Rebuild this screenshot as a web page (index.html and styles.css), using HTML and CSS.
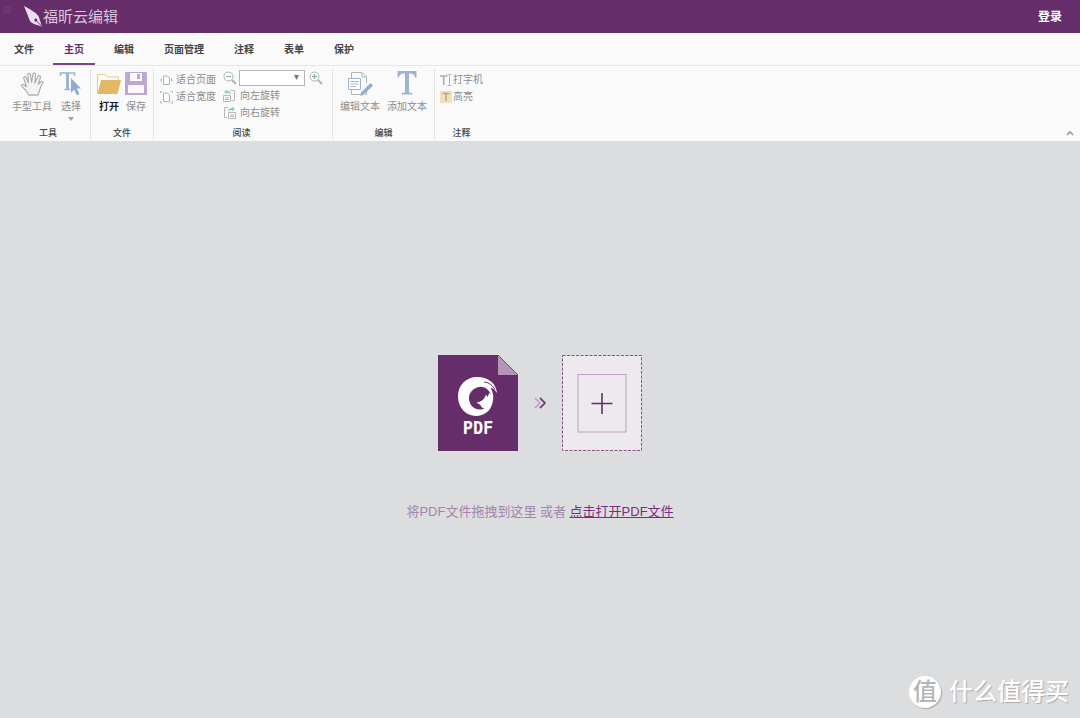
FILE: index.html
```html
<!DOCTYPE html>
<html lang="zh-CN">
<head>
<meta charset="utf-8">
<meta name="viewport" content="width=device-width, initial-scale=1">
<title>福昕云编辑</title>
<link rel="stylesheet" href="styles.css">
</head>
<body>
<header class="topbar">
  <div class="brand">
    <svg class="brand-icon" width="20" height="22" viewBox="0 0 20 22" aria-hidden="true">
      <path d="M1 0C6 2.500 13 6.500 15.500 10L19 20.500C14 19 8.500 17.500 7 15Z" fill="#eadff0"/>
      <path d="M18.500 20L13.500 15" stroke="#662d6b" stroke-width="1"/>
      <circle cx="12.800" cy="14" r="1.500" fill="#662d6b"/>
    </svg>
    <h1 class="brand-name">福昕云编辑</h1>
  </div>
  <button class="login" type="button">登录</button>
</header>

<nav class="tabs">
  <button class="tab" type="button">文件</button>
  <button class="tab tab-active" type="button">主页</button>
  <button class="tab" type="button">编辑</button>
  <button class="tab" type="button">页面管理</button>
  <button class="tab" type="button">注释</button>
  <button class="tab" type="button">表单</button>
  <button class="tab" type="button">保护</button>
</nav>

<section class="ribbon">
  <div class="group group-tools">
    <div class="group-body">
      <button class="tool" type="button">
        <svg width="26" height="26" viewBox="0 0 26 26" aria-hidden="true">
          <path d="M9.500 24C8.500 20.500 6 18.500 3 15.500C1.500 13.800 3.300 12.600 5 13.800L7.500 15.700L4.800 7.500C4.300 5.500 6.500 5 7.200 6.800L9.500 12L8.800 3.800C8.800 1.700 11.200 1.700 11.500 3.700L12.600 11.500L14 3.200C14.400 1.300 16.700 1.600 16.500 3.700L15.900 12L19 5.600C19.900 3.800 22 4.700 21.400 6.600L19.200 13.300L21.700 10.800C23.200 9.500 24.700 10.900 23.500 12.500C21.500 15.500 20.500 20 19 24Z" fill="#f4f4f4" stroke="#a8a8a8" stroke-width="1.100" stroke-linejoin="round"/>
          <path d="M9.500 24H19" stroke="#bdbdbd" stroke-width="1.500"/>
        </svg>
        <span>手型工具</span>
      </button>
      <button class="tool" type="button">
        <svg width="26" height="26" viewBox="0 0 26 26" aria-hidden="true">
          <path d="M2.500 5V2H16.500V5M9.500 2V18M6.500 18.500H12.500" fill="none" stroke="#9db3d6" stroke-width="1.500"/>
          <path d="M9.500 2V18" stroke="#9db3d6" stroke-width="3"/>
          <path d="M13 7L23 17.500H18.700L21.500 23L18.800 24.300L16.200 18.800L13 21.800Z" fill="#8fa9d0"/>
        </svg>
        <span>选择</span>
        <svg width="6" height="4" viewBox="0 0 6 4" aria-hidden="true"><path d="M0 0H6L3 4Z" fill="#a5a29c"/></svg>
      </button>
    </div>
    <h2 class="group-title">工具</h2>
  </div>

  <div class="group group-file">
    <div class="group-body">
      <button class="tool tool-enabled" type="button">
        <svg width="26" height="26" viewBox="0 0 26 26" aria-hidden="true">
          <path d="M1.500 22V3.500H9L11 6H22.500V10" fill="#fff" stroke="#e9c98f" stroke-width="1"/>
          <path d="M5 9H25L21.500 23H1.500Z" fill="#e3b864"/>
        </svg>
        <span>打开</span>
      </button>
      <button class="tool" type="button">
        <svg width="24" height="26" viewBox="0 0 24 26" aria-hidden="true">
          <path d="M1 1H22L23 2V24H1Z" fill="#bda7d3"/>
          <path d="M6 2H18V10H6Z M4 14H20V22H4Z" fill="#fbf9fc"/>
          <path d="M13 3H16V8H13Z" fill="#bda7d3"/>
        </svg>
        <span>保存</span>
      </button>
    </div>
    <h2 class="group-title">文件</h2>
  </div>

  <div class="group group-read">
    <div class="group-body">
      <div class="rows rows-fit">
        <button class="row-tool" type="button">
          <svg width="13" height="14" viewBox="0 0 13 14" aria-hidden="true">
            <path d="M3.500 3H7.500L9.500 5V11.500H3.500Z" fill="#fff" stroke="#b0b0b0"/>
            <path d="M0 7L2 5V9ZM13 7L11 5V9Z" fill="#9ccdb2"/>
          </svg>
          <span>适合页面</span>
        </button>
        <button class="row-tool" type="button">
          <svg width="13" height="14" viewBox="0 0 13 14" aria-hidden="true">
            <path d="M3.500 3H7.500L9.500 5V11.500H3.500Z" fill="#fff" stroke="#b0b0b0"/>
            <path d="M.5 3V1.500H2.500M10.500 1.500H12.500V3M.5 11V13H2.500M10.500 13H12.500V11" fill="none" stroke="#9ccdb2"/>
          </svg>
          <span>适合宽度</span>
        </button>
      </div>
      <div class="rows">
        <div class="zoom-row">
          <button class="icon-button" type="button" aria-label="缩小">
            <svg width="14" height="14" viewBox="0 0 14 14" aria-hidden="true">
              <circle cx="5.500" cy="5.500" r="4.500" fill="#fff" stroke="#b0b0b0"/>
              <path d="M3 5.500H8" stroke="#86bf9f" stroke-width="1.300"/>
              <path d="M9 9L13 13" stroke="#b0b0b0" stroke-width="1.800"/>
            </svg>
          </button>
          <span class="zoom-box">
            <select class="zoom-select" aria-label="缩放比例"><option></option></select>
            <svg class="zoom-arrow" width="5" height="5" viewBox="0 0 5 5" aria-hidden="true"><path d="M0 0H5L2.500 5Z" fill="#777"/></svg>
          </span>
          <button class="icon-button" type="button" aria-label="放大">
            <svg width="14" height="14" viewBox="0 0 14 14" aria-hidden="true">
              <circle cx="5.500" cy="5.500" r="4.500" fill="#fff" stroke="#b0b0b0"/>
              <path d="M3 5.500H8M5.500 3V8" stroke="#86bf9f" stroke-width="1.500"/>
              <path d="M9 9L13 13" stroke="#b0b0b0" stroke-width="1.800"/>
            </svg>
          </button>
        </div>
        <button class="row-tool row-rotate" type="button">
          <svg width="13" height="14" viewBox="0 0 13 14" aria-hidden="true">
            <path d="M7.500 1.500H11.500V11.500H8.500M.5 6.500H7.500V12.500H.5Z M2 9H6M2 10.500H6" fill="none" stroke="#b8b8b8"/>
            <path d="M1 3L4 .5V2C7 2 8 3.500 8 6C7 4.500 6 4 4 4V5.500Z" fill="#9ccdb2"/>
          </svg>
          <span>向左旋转</span>
        </button>
        <button class="row-tool row-rotate" type="button">
          <svg width="13" height="14" viewBox="0 0 13 14" aria-hidden="true">
            <path d="M5 1.500H1.500V11.500H4M5.500 6.500H12.500V12.500H5.500Z M7 9H11M7 10.500H11" fill="none" stroke="#b8b8b8"/>
            <path d="M12 3L9 .5V2C6 2 5 3.500 5 6C6 4.500 7 4 9 4V5.500Z" fill="#9ccdb2"/>
          </svg>
          <span>向右旋转</span>
        </button>
      </div>
    </div>
    <h2 class="group-title">阅读</h2>
  </div>

  <div class="group group-edit">
    <div class="group-body">
      <button class="tool" type="button">
        <svg width="26" height="26" viewBox="0 0 26 26" aria-hidden="true">
          <path d="M4.500 7V1.500H15L19.500 6V12M4.500 19V23.500H13M19.500 20V23.500H18M15 1.500V6H19.500" fill="none" stroke="#b4b4b4"/>
          <path d="M1.500 7.500H13.500V18.500H1.500Z" fill="#fff" stroke="#9db3d6"/>
          <path d="M3.500 10.500H11.500M3.500 13H11.500M3.500 15.500H9" stroke="#9db3d6"/>
          <path d="M13 25L14 21.500L23.500 12L26 14.500L16.500 24Z" fill="#94add3"/>
        </svg>
        <span>编辑文本</span>
      </button>
      <button class="tool" type="button">
        <svg width="26" height="26" viewBox="0 0 26 26" aria-hidden="true">
          <path d="M3.500 0H22.500V6.500H21C20.500 3.500 19 2.500 15 2.500V20.500C15 21.500 16 22 18.500 22V23.500H7.500V22C10 22 11 21.500 11 20.500V2.500C7 2.500 5.500 3.500 5 6.500H3.500Z" fill="#9db3d6"/>
        </svg>
        <span>添加文本</span>
      </button>
    </div>
    <h2 class="group-title">编辑</h2>
  </div>

  <div class="group group-note">
    <div class="group-body">
      <div class="rows rows-fit">
        <button class="row-tool row-tight" type="button">
          <svg width="12" height="14" viewBox="0 0 12 14" aria-hidden="true">
            <path d="M0 3H7.500M3.700 3V12" stroke="#adadad" stroke-width="1.500"/>
            <path d="M7.500 1.500H9L9.500 2L10 1.500H11.500M9.500 2V12M7.500 12.500H11.500" fill="none" stroke="#9db8e0"/>
          </svg>
          <span>打字机</span>
        </button>
        <button class="row-tool row-tight" type="button">
          <svg width="12" height="14" viewBox="0 0 12 14" aria-hidden="true">
            <path d="M0 1H12V13H0Z" fill="#f3dfb9"/>
            <path d="M2.500 3.500H9.500M6 3V11" stroke="#b3a78f" stroke-width="1.500"/>
          </svg>
          <span>高亮</span>
        </button>
      </div>
    </div>
    <h2 class="group-title">注释</h2>
  </div>

  <button class="collapse" type="button" aria-label="收起">
    <svg width="8" height="6" viewBox="0 0 8 6" aria-hidden="true"><path d="M1 5L4 2L7 5" fill="none" stroke="#999" stroke-width="1.600"/></svg>
  </button>
</section>

<main class="workspace">
  <div class="drop-visual">
    <svg width="80" height="96" viewBox="0 0 80 96" role="img" aria-label="PDF">
      <path d="M0 0H60L80 20V96H0Z" fill="#662d6b"/>
      <path d="M60 0L80 20H60Z" fill="#b396b6"/>
      <path d="M60 0L80 20" stroke="#7d4b83"/>
      <path d="M20 41.500C20 30 28 22 39 22C50 22 58 28 59 38C57 35 55 33.500 52.500 32.500C55.500 38 56 43 54.500 48C52.500 56 46 61 38 61C28 61 20 52.500 20 41.500Z" fill="#fff"/>
      <path d="M50 35C47 32 43 31 39 32.500C34 34.500 31 38.500 31 43C31 50 36 54.500 42 54.500C44 54.500 45.500 54 46.500 53.500C44 53 43 52 42.500 50L38.500 47.500C43 47 46.500 44.500 48 39.500L49.500 42L51.500 37.500L53 40C52.500 38 51.500 36.500 50 35Z" fill="#662d6b"/>
      <path d="M46 27C51 27.500 55 30.500 57 35" fill="none" stroke="#662d6b" stroke-width="1"/>
      <text class="doc-label" x="40" y="79" text-anchor="middle">PDF</text>
    </svg>
    <svg width="12" height="12" viewBox="0 0 12 12" aria-hidden="true">
      <path d="M1 1L6 6L1 11" fill="none" stroke="#b99fbd" stroke-width="1.500"/>
      <path d="M6 1L11 6L6 11" fill="none" stroke="#7b4181" stroke-width="1.800"/>
    </svg>
    <svg width="80" height="96" viewBox="0 0 80 96" aria-hidden="true">
      <rect x=".5" y=".5" width="79" height="95" fill="#eee9ef" stroke="#86508b" stroke-dasharray="3 1.500"/>
      <rect x="16" y="19.500" width="48" height="57.500" fill="none" stroke="#bfa0c4"/>
      <path d="M29.500 48.500H50.500M40 38V59" stroke="#662d6b" stroke-width="1.600"/>
    </svg>
  </div>
  <p class="hint">将PDF文件拖拽到这里 或者 <a class="open-link" href="#">点击打开PDF文件</a></p>
  <div class="watermark">
    <span class="watermark-badge">值</span>
    <span>什么值得买</span>
  </div>
</main>
</body>
</html>
```
FILE: styles.css
```css
* {
  box-sizing: border-box;
}

body {
  display: flex;
  flex-direction: column;
  min-height: 100vh;
  margin: 0;
  background: #dcdddf;
  color: #444;
  font-family: "Liberation Sans", "Noto Sans CJK SC", sans-serif;
  font-size: 10px;
  line-height: 14px;
}

button {
  padding: 0;
  border: 0;
  background: none;
  color: inherit;
  font: inherit;
  cursor: pointer;
}

svg {
  display: block;
  flex: none;
}

.topbar {
  display: flex;
  align-items: center;
  justify-content: space-between;
  height: 33px;
  padding: 0 18px 0 23px;
  background: #662d6b linear-gradient(#6d3673, #6d3673) 3px 6px / 8px 8px no-repeat;
}

.brand {
  display: flex;
  align-items: center;
}

.brand-name {
  margin: 0;
  color: #d9c7dc;
  font-size: 15px;
  font-weight: 400;
  line-height: 22px;
}

.login {
  color: #fff;
  font-size: 12px;
  font-weight: 700;
}

.tabs {
  display: flex;
  gap: 8px;
  height: 33px;
  padding-left: 3px;
  border-bottom: 1px solid #e6e6e6;
  background: #fafafa;
}

.tab {
  padding: 3px 11px 0;
  border-bottom: 2px solid transparent;
  font-weight: 700;
}

.tab-active {
  border-color: #7d4284;
  color: #662d6b;
}

.ribbon {
  display: flex;
  padding: 3px 6px 2px;
  background: #fafafa;
}

.group {
  display: flex;
  flex-direction: column;
  justify-content: space-between;
  min-height: 70px;
  border-right: 1px solid #e2e2e2;
}

.group-body {
  display: flex;
  align-items: flex-start;
  color: #8c8c8c;
}

.group-title {
  margin: 0;
  font-size: 9px;
  font-weight: 500;
  line-height: 12px;
  text-align: center;
}

.group-tools .group-body {
  gap: 6px;
  padding: 0 6px;
}

.group-file {
  padding: 0 5px;
}

.group-file .group-body {
  gap: 2px;
}

.group-read {
  padding: 0 9px 0 6px;
}

.group-read .group-body {
  gap: 7px;
}

.group-edit {
  padding: 0 7px;
}

.group-edit .group-body {
  gap: 7px;
}

.group-note {
  padding: 0 5px;
  border-right: 0;
}

.tool {
  display: flex;
  flex-direction: column;
  align-items: center;
  gap: 3px;
  padding-top: 2px;
}

.tool-enabled {
  color: #222;
  font-weight: 700;
}

.rows {
  display: flex;
  flex-direction: column;
  gap: 2px;
}

.rows-fit {
  padding-top: 3px;
}

.row-tool {
  display: flex;
  align-items: center;
  gap: 3px;
  height: 15px;
}

.row-rotate {
  gap: 4px;
}

.row-tight {
  gap: 1px;
}

.zoom-row {
  display: flex;
  align-items: center;
  gap: 2px;
  height: 17px;
}

.zoom-row .icon-button:last-child {
  padding-left: 2px;
}

.zoom-box {
  display: grid;
  align-items: center;
}

.zoom-select,
.zoom-arrow {
  grid-area: 1 / 1;
}

.zoom-select {
  width: 66px;
  height: 16px;
  border: 1px solid #b5b5b5;
  border-radius: 0;
  background: #fff;
  font-size: 10px;
  appearance: none;
}

.zoom-arrow {
  justify-self: end;
  margin-right: 6px;
  pointer-events: none;
}

.collapse {
  align-self: flex-end;
  margin-left: auto;
  padding: 3px 0;
}

.workspace {
  position: relative;
  display: flex;
  flex: 1;
  flex-direction: column;
  align-items: center;
  justify-content: center;
  gap: 51px;
  padding-top: 17px;
}

.drop-visual {
  display: flex;
  align-items: center;
  gap: 16px;
}

.doc-label {
  fill: #fff;
  font-family: "DejaVu Sans Mono", monospace;
  font-size: 17px;
  font-weight: 700;
}

.hint {
  margin: 0;
  color: #a583aa;
  font-size: 13px;
  line-height: 20px;
}

.open-link {
  color: #7f2a87;
}

.watermark {
  position: absolute;
  right: 11px;
  bottom: 10px;
  display: flex;
  align-items: center;
  gap: 8px;
  color: #fff;
  font-size: 24px;
  font-weight: 500;
  line-height: 32px;
  text-shadow: 1px 1px 1px #aaa;
}

.watermark-badge {
  width: 32px;
  height: 32px;
  border-radius: 50%;
  background: #fff;
  box-shadow: 1px 1px 1px #aaa;
  color: #b5b5b5;
  text-align: center;
  text-shadow: none;
}
```
